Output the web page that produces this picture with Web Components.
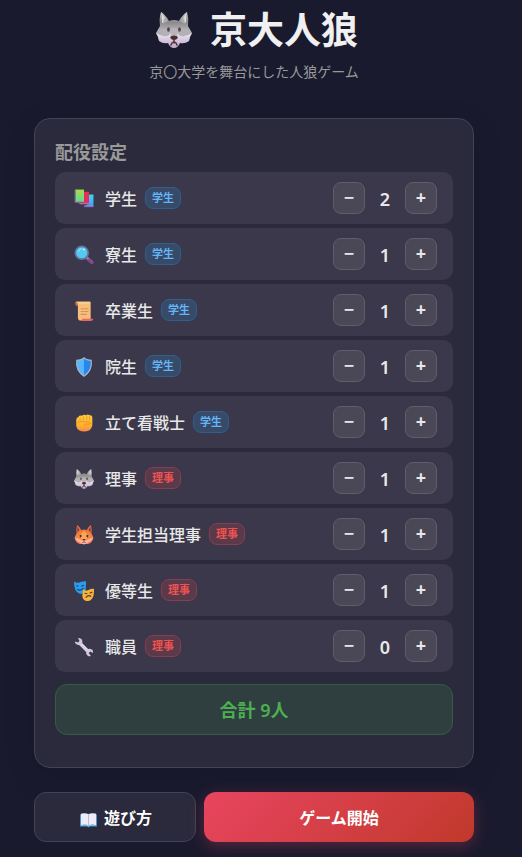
<!DOCTYPE html>
<html lang="ja">
<head>
<meta charset="UTF-8">
<meta name="viewport" content="width=device-width, initial-scale=1.0">
<title>京大人狼</title>
<style>
    body {
        margin: 0;
        min-height: 100vh;
        background: #1a1a2e;
        color: #e8e8e8;
        font-family: "Noto Sans", "Noto Sans CJK JP", sans-serif;
    }
</style>
</head>
<body>
<jinro-app>
    <game-header icon="wolf" heading="京大人狼">京〇大学を舞台にした人狼ゲーム</game-header>
    <role-panel heading="配役設定">
        <role-row icon="books" team="student" count="2">学生</role-row>
        <role-row icon="search" team="student" count="1">寮生</role-row>
        <role-row icon="scroll" team="student" count="1">卒業生</role-row>
        <role-row icon="shield" team="student" count="1">院生</role-row>
        <role-row icon="fist" team="student" count="1">立て看戦士</role-row>
        <role-row icon="wolf" team="board" count="1">理事</role-row>
        <role-row icon="fox" team="board" count="1">学生担当理事</role-row>
        <role-row icon="masks" team="board" count="1">優等生</role-row>
        <role-row icon="wrench" team="board" count="0">職員</role-row>
    </role-panel>
    <action-button slot="actions" icon="book">遊び方</action-button>
    <action-button slot="actions" primary>ゲーム開始</action-button>
</jinro-app>

<script>
// All icons share a 36x36 view box
const ICONS = {
    wolf: `
        <defs>
            <linearGradient id="fur" x2="0" y2="1"><stop stop-color="#d2d1d3"/><stop offset=".25" stop-color="#9b9a9c"/><stop offset=".35" stop-color="#8b8a8d"/><stop offset=".6" stop-color="#b3b1b4"/><stop offset="1" stop-color="#b5adbb"/></linearGradient>
            <linearGradient id="cheek" x2="0" y2="1"><stop stop-color="#eeeaf0"/><stop offset=".55" stop-color="#d4c4de"/><stop offset="1" stop-color="#bda9ca"/></linearGradient>
        </defs>
        <path fill="url(#fur)" d="M5 0C7 1 11 5 13 9Q18 7 23 9C25 5 29 1 31 0Q33 7 32 14L36 21L34 24L33 28L28 30H8L3 28L2 24L0 21L4 14Q3 6 5 0Z"/>
        <path fill="#dddbde" d="M6 2L11 9L6 11ZM30 2L25 9L30 11Z"/>
        <path fill="#aaa9ad" d="M8 6L12 9L7 12ZM28 6L24 9L29 12Z"/>
        <path fill="url(#cheek)" d="M0 21Q6 25 11 24Q14 23 15 20H21Q22 23 25 24Q30 25 36 21L34 25L33 29Q29 32 24 31Q22 36 18 36Q14 36 12 31Q7 32 3 29L2 25Z"/>
        <path fill="#b6b4b8" d="M14 17Q18 15 22 17L21 25H15Z"/>
        <ellipse cx="12.500" cy="17.500" rx="1.400" ry="2.200" fill="#59424c"/><ellipse cx="23.500" cy="17.500" rx="1.400" ry="2.200" fill="#59424c"/>
        <path fill="#4b2d33" d="M14 25Q18 22 22 25Q21 28 18 28Q15 28 14 25Z"/>
        <path fill="none" stroke="#593a40" stroke-width="1.600" stroke-linecap="round" d="M18 28V31M15 33Q16 30 18 30Q20 30 21 33"/>`,
    books: `
        <defs><linearGradient id="g" x2="0" y2="1"><stop stop-color="#a6dc4d"/><stop offset="1" stop-color="#65d98b"/></linearGradient>
        <linearGradient id="b" x2="0" y2="1"><stop stop-color="#42d7f2"/><stop offset="1" stop-color="#3fa2f5"/></linearGradient></defs>
        <path fill="url(#b)" d="M23 10H35V30H23Z"/><path fill="#7452bd" d="M17 30H35V33H19Z"/><path fill="#bde6ff" d="M19 30H35V31H19Z"/>
        <path fill="#e52d5b" d="M13 5H27V25H13Z"/><path fill="#a13d78" d="M8 25H27V28H10Z"/><path fill="#e3a2bd" d="M10 25H27V26H10Z"/>
        <path fill="url(#g)" d="M2 1H18V22H2Z"/><path fill="#6b6b87" d="M1 2L3 1V22H18V25H2L1 23Z"/><path fill="#b5d6c2" d="M3 22H18V23H3Z"/>`,
    search: `
        <path d="M23 23L32 31" stroke="#86498f" stroke-width="6.500" stroke-linecap="round"/>
        <path d="M22 21L26 25" stroke="#8091b5" stroke-width="3"/>
        <circle cx="14" cy="14" r="11.500" fill="#54c9ef" stroke="#6673a3" stroke-width="3"/>
        <path d="M8 12Q9 7 14 6" fill="none" stroke="#84e0f7" stroke-width="2"/><circle cx="18" cy="8" r="1.500" fill="#e4fbff"/>`,
    scroll: `
        <path fill="#bd6546" d="M2 2H8V9H5Q2 8 2 5Z"/>
        <path fill="#f7bd79" d="M5 1H29Q31 2 30 6V31Q30 35 26 35H10Q7 34 7 30V7Q7 3 3 2Z"/>
        <path fill="#f7d099" d="M7 2H28V5H9Z"/>
        <path d="M12 14H26M12 19H26M12 24H23" stroke="#d09562" stroke-width="2"/>
        <path fill="#e86865" d="M15 32H35Q34 36 30 36H11Q15 35 15 32Z"/>`,
    shield: `
        <path fill="#a5b3c8" d="M18 0Q23 5 32 5Q35 25 18 36Q1 25 4 5Q13 5 18 0Z"/>
        <path fill="#54b7ff" d="M18 3Q12 7 6 7Q4 23 18 33Z"/>
        <path fill="#2688ed" d="M18 3Q24 7 30 7Q32 23 18 33Z"/>`,
    fist: `
        <defs><linearGradient id="h" x2="0" y2="1"><stop stop-color="#ffcd39"/><stop offset=".65" stop-color="#ffb02e"/><stop offset="1" stop-color="#ff8351"/></linearGradient></defs>
        <path fill="url(#h)" d="M4 13Q4 8 8 7Q10 3 14 5Q18 2 22 4Q25 1 28 4Q33 3 33 9V22Q32 28 28 31Q18 36 9 31Q4 28 4 21Z"/>
        <path d="M11 8V15M17 6V14M23 5V13M28 5V13" fill="none" stroke="#e6952c" stroke-width="1.200"/>
        <path d="M6 17Q12 14 17 16H27Q31 17 29 20H20Q18 22 19 24" fill="none" stroke="#e08a2b" stroke-width="1.300"/>`,
    fox: `
        <defs><linearGradient id="o" x2="0" y2="1"><stop stop-color="#e66739"/><stop offset="1" stop-color="#ff9847"/></linearGradient></defs>
        <path fill="url(#o)" d="M6 0Q9 2 13 9Q18 7 23 9Q27 2 30 0Q33 7 31 14L35 23L29 32Q18 37 7 32L1 23L5 14Q3 7 6 0Z"/>
        <path fill="#753f46" d="M6 3L10 9L6 13ZM30 3L26 9L30 13Z"/>
        <path fill="#ffb35b" d="M18 10L25 17L22 26H14L11 17Z" opacity=".7"/>
        <path fill="#f9b9a4" d="M1 24Q8 24 14 28H22Q28 24 35 24L30 31Q18 38 6 31Z"/>
        <path fill="#ff8061" d="M2 26Q9 29 15 34Q9 35 5 31ZM34 26Q27 29 21 34Q27 35 31 31Z"/>
        <ellipse cx="12" cy="20" rx="1.700" ry="2.500" fill="#4d3039"/><ellipse cx="24" cy="20" rx="1.700" ry="2.500" fill="#4d3039"/>
        <path fill="#4d3039" d="M15 25H21L18 29Z"/><path d="M15 32Q18 28 21 32" fill="none" stroke="#6c3640" stroke-width="1.500"/>`,
    masks: `
        <path fill="#299de9" d="M0 1Q7 5 12 2Q17 0 22 1L21 16Q18 24 10 23Q0 20 0 1Z"/>
        <path d="M4 9L8 9M13 9L18 8M6 15Q12 19 17 13" fill="none" stroke="#183f76" stroke-width="2"/>
        <path fill="#f6b43d" d="M16 15Q21 19 26 16Q31 13 36 14Q37 34 26 36Q16 37 15 27Z"/>
        <path d="M19 22L24 23M28 22L33 20M21 30Q26 24 31 28" fill="none" stroke="#603b27" stroke-width="2"/>`,
    wrench: `
        <path d="M10 11L27 28" stroke="#d7cbe0" stroke-width="6"/>
        <path d="M13 11L27 25" stroke="#eee8f2" stroke-width="2"/>
        <path fill="#d5c7e4" d="M7 2Q14 2 15 7Q16 13 11 14Q6 16 2 11L2 8L7 10L10 7ZM34 27Q35 22 28 21Q22 21 22 27Q21 34 29 35L30 33L26 29L29 26L34 29Z"/>`,
    book: `
        <path fill="#3d91d6" d="M0 8L3 6H33L36 8V33H20L18 35L16 33H0Z"/>
        <path fill="#eeebf4" d="M2 6Q10 3 18 7Q26 3 34 6V30Q25 27 18 31Q11 27 2 30Z"/>
        <path d="M18 7V31" stroke="#aaa5c5" stroke-width="1.500"/>
        <path d="M3 31Q12 29 18 32Q25 29 33 31" fill="none" stroke="#a2cdf2" stroke-width="1.500"/>`
};

const TEAMS = {
    student: '学生',
    board: '理事'
};

class GameIcon extends HTMLElement {
    constructor() {
        super();
        this.attachShadow({ mode: 'open' });
    }

    connectedCallback() {
        this.shadowRoot.innerHTML = `
        <style>
            :host {
                display: inline-block;
                width: 20px;
                height: 20px;
                flex: none;
            }

            svg {
                display: block;
                width: 100%;
                height: 100%;
            }
        </style>
        <svg viewBox="0 0 36 36" aria-hidden="true">${ICONS[this.getAttribute('name')]}</svg>
        `;
    }
}

class GameHeader extends HTMLElement {
    constructor() {
        super();
        this.attachShadow({ mode: 'open' });
    }

    connectedCallback() {
        this.shadowRoot.innerHTML = `
        <style>
            :host {
                display: block;
                text-align: center;
            }

            h1 {
                display: flex;
                justify-content: center;
                align-items: center;
                gap: 18px;
                margin: 0;
                padding: 4px 0 0 6px;
                font-size: 37px;
                line-height: 52px;
                font-weight: 700;
                color: #f0f0f0;
            }

            game-icon {
                width: 36px;
                height: 36px;
            }

            p {
                margin: 4px 0 0;
                font-size: 14px;
                line-height: 24px;
                color: #999;
            }
        </style>
        <h1><game-icon name="${this.getAttribute('icon')}"></game-icon>${this.getAttribute('heading')}</h1>
        <p><slot></slot></p>
        `;
    }
}

class RoleRow extends HTMLElement {
    constructor() {
        super();
        this.attachShadow({ mode: 'open' });
    }

    get count() {
        return Number(this.getAttribute('count'));
    }

    connectedCallback() {
        const team = this.getAttribute('team');
        const name = this.textContent;

        this.shadowRoot.innerHTML = `
        <style>
            :host {
                display: flex;
                align-items: center;
                justify-content: space-between;
                padding: 10px 16px;
                border-radius: 10px;
                background: #3a384a;
            }

            .info, .stepper {
                display: flex;
                align-items: center;
            }

            .info {
                gap: 8px;
                padding-left: 3px;
            }

            .info game-icon, .name {
                padding-top: 2px;
            }

            .name {
                padding-left: 3px;
                font-size: 16px;
                line-height: 24px;
                font-weight: 500;
            }

            .team {
                padding: 0 6px;
                border: 1px solid;
                border-radius: 8px;
                font-size: 11px;
                line-height: 20px;
                font-weight: 700;
            }

            .student {
                color: #64b5f6;
                background: #374b68;
                border-color: #305f8c;
            }

            .board {
                color: #ef5350;
                background: #5a394a;
                border-color: #843f50;
            }

            button {
                width: 32px;
                height: 32px;
                padding: 0 0 2px;
                border: 1px solid #5f5d6b;
                border-radius: 8px;
                background: #4a4857;
                color: #e8e8e8;
                font: 700 18px/28px "Noto Sans", sans-serif;
                cursor: pointer;
            }

            output {
                width: 40px;
                padding-top: 2px;
                text-align: center;
                font: 600 18px/24px "Noto Sans", sans-serif;
            }
        </style>
        <div class="info">
            <game-icon name="${this.getAttribute('icon')}"></game-icon>
            <span class="name"><slot></slot></span>
            <span class="team ${team}">${TEAMS[team]}</span>
        </div>
        <div class="stepper">
            <button type="button" data-step="-1" aria-label="${name}を減らす">−</button>
            <output>${this.count}</output>
            <button type="button" data-step="1" aria-label="${name}を増やす">+</button>
        </div>
        `;

        this.shadowRoot.querySelectorAll('button').forEach(button => {
            button.addEventListener('click', () => this.step(Number(button.dataset.step)));
        });
    }

    step(amount) {
        this.setAttribute('count', Math.max(0, this.count + amount));
        this.shadowRoot.querySelector('output').textContent = this.count;
        this.dispatchEvent(new CustomEvent('count-change', { bubbles: true }));
    }
}

class RolePanel extends HTMLElement {
    constructor() {
        super();
        this.attachShadow({ mode: 'open' });
    }

    connectedCallback() {
        this.shadowRoot.innerHTML = `
        <style>
            :host {
                display: block;
                padding: 20px 20px 32px;
                border: 1px solid #444353;
                border-radius: 16px;
                background: #2a2a3c;
                box-shadow: 0 8px 32px rgba(0, 0, 0, 0.1);
            }

            h2 {
                margin: 0 0 6px;
                font-size: 18px;
                line-height: 27px;
                font-weight: 600;
                color: #999;
            }

            .roles {
                display: grid;
                gap: 4px;
            }

            .total {
                margin-top: 12px;
                padding: 13px 12px 11px;
                border: 1px solid #365b43;
                border-radius: 12px;
                background: #2f3e3f;
                text-align: center;
                font-size: 18px;
                line-height: 25px;
                font-weight: 600;
                color: #4caf50;
            }
        </style>
        <h2>${this.getAttribute('heading')}</h2>
        <div class="roles"><slot></slot></div>
        <div class="total"></div>
        `;

        this.addEventListener('count-change', () => this.updateTotal());
        this.updateTotal();
    }

    updateTotal() {
        const rows = [...this.querySelectorAll('role-row')];
        const total = rows.reduce((sum, row) => sum + Number(row.getAttribute('count')), 0);
        this.shadowRoot.querySelector('.total').textContent = `合計 ${total}人`;
    }
}

class ActionButton extends HTMLElement {
    constructor() {
        super();
        this.attachShadow({ mode: 'open' });
    }

    connectedCallback() {
        const icon = this.getAttribute('icon');

        this.shadowRoot.innerHTML = `
        <style>
            :host {
                display: block;
            }

            button {
                display: flex;
                align-items: center;
                justify-content: center;
                gap: 7px;
                width: 100%;
                height: 50px;
                padding: 2px 16px 0;
                border: 1px solid #444353;
                border-radius: 12px;
                background: #2a2a3c;
                color: #fff;
                font: inherit;
                font-size: 16px;
                line-height: 24px;
                font-weight: 700;
                cursor: pointer;
            }

            game-icon {
                width: 17px;
                height: 17px;
                padding: 2px 0 0 2px;
            }

            :host([primary]) button {
                border: 0;
                background: linear-gradient(135deg, #e94560, #c0392b);
                box-shadow: 0 4px 16px rgba(233, 69, 96, 0.3);
            }
        </style>
        <button type="button">${icon ? `<game-icon name="${icon}"></game-icon>` : ''}<span><slot></slot></span></button>
        `;
    }
}

class JinroApp extends HTMLElement {
    constructor() {
        super();
        this.attachShadow({ mode: 'open' });
    }

    connectedCallback() {
        this.shadowRoot.innerHTML = `
        <style>
            :host {
                display: block;
                padding: 0 48px 15px 34px;
            }

            main {
                display: grid;
                gap: 24px;
            }

            ::slotted(game-header) {
                margin-bottom: 10px;
            }

            .actions {
                display: grid;
                grid-template-columns: 3fr 5fr;
                gap: 8px;
            }
        </style>
        <main>
            <slot></slot>
            <div class="actions"><slot name="actions"></slot></div>
        </main>
        `;
    }
}

customElements.define('game-icon', GameIcon);
customElements.define('game-header', GameHeader);
customElements.define('role-row', RoleRow);
customElements.define('role-panel', RolePanel);
customElements.define('action-button', ActionButton);
customElements.define('jinro-app', JinroApp);
</script>
</body>
</html>
